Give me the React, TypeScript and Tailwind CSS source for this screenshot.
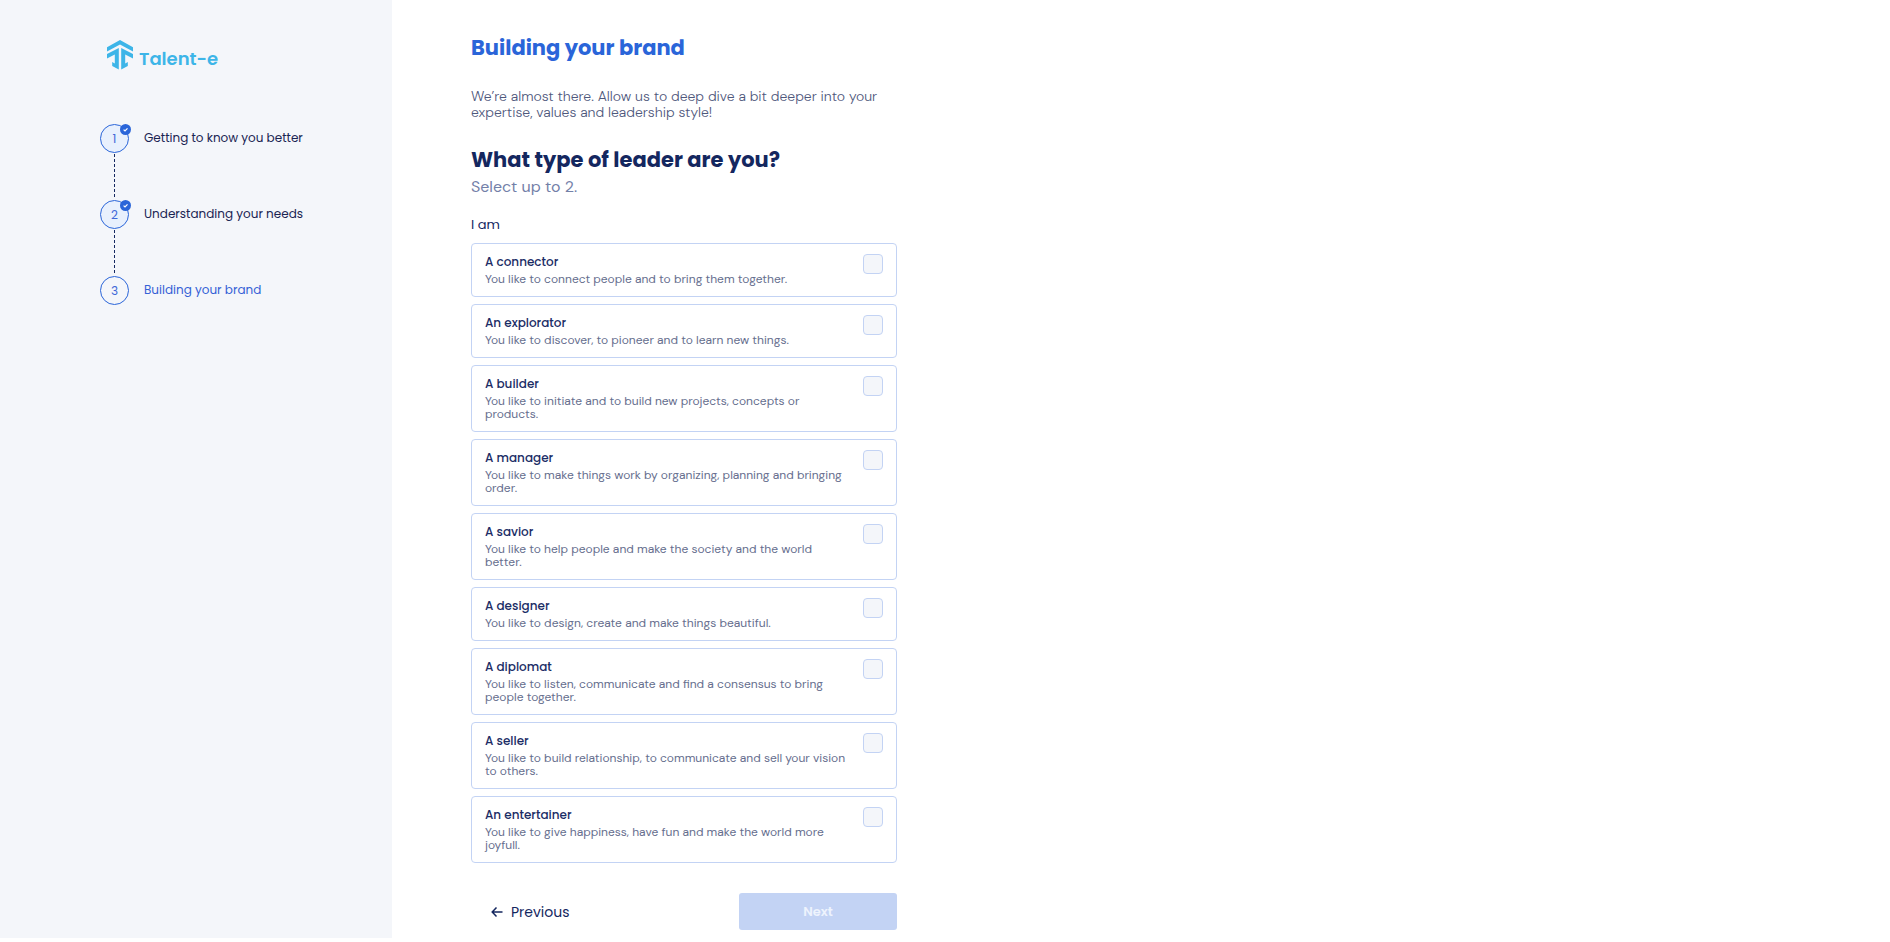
import { useState } from 'react'

interface Leader {
  id: string
  title: string
  description: string
}

interface Step {
  label: string
  done: boolean
}

const MAX_CHOICES = 2

const steps: Step[] = [
  { label: 'Getting to know you better', done: true },
  { label: 'Understanding your needs', done: true },
  { label: 'Building your brand', done: false },
]

const leaders: Leader[] = [
  { id: 'connector', title: 'A connector', description: 'You like to connect people and to bring them together.' },
  { id: 'explorator', title: 'An explorator', description: 'You like to discover, to pioneer and to learn new things.' },
  { id: 'builder', title: 'A builder', description: 'You like to initiate and to build new projects, concepts or products.' },
  { id: 'manager', title: 'A manager', description: 'You like to make things work by organizing, planning and bringing order.' },
  { id: 'savior', title: 'A savior', description: 'You like to help people and make the society and the world better.' },
  { id: 'designer', title: 'A designer', description: 'You like to design, create and make things beautiful.' },
  { id: 'diplomat', title: 'A diplomat', description: 'You like to listen, communicate and find a consensus to bring people together.' },
  { id: 'seller', title: 'A seller', description: 'You like to build relationship, to communicate and sell your vision to others.' },
  { id: 'entertainer', title: 'An entertainer', description: 'You like to give happiness, have fun and make the world more joyfull.' },
]

function Logo() {
  return (
    <a href="#" className="flex items-end gap-1.5 text-[#3db5e8]">
      <svg viewBox="0 0 26 30" className="h-[30px] w-[26px]" fill="currentColor" aria-hidden="true">
        <path d="M13 0 26 7.2V11.6L13 4.4 0 11.6V7.2Z" />
        <path d="M11.8 8V29.6L5.2 26V22L7.8 23.4V14.4L0 18.4V14Z" />
        <path d="M14.2 8V29.6L20.8 26V22L18.2 23.4V14.4L26 18.4V14Z" />
      </svg>
      <span className="text-lg leading-[22px] font-semibold">Talent-e</span>
    </a>
  )
}

function StepItem({ step, index }: { step: Step; index: number }) {
  const isLast = index === steps.length - 1

  return (
    <li className="flex gap-[15px]">
      <div className="flex flex-col items-center">
        <div
          className={`relative flex size-[29px] items-center justify-center rounded-full border border-[#2a65d9] text-xs text-[#4169d8] ${
            step.done ? 'bg-[#e8f0fd]' : ''
          }`}
        >
          {index + 1}
          {step.done && (
            <svg viewBox="0 0 11 11" className="absolute -top-px -right-[3px] size-[11px]" aria-hidden="true">
              <circle cx="5.5" cy="5.5" r="5.5" fill="#2a65d9" />
              <path d="M3.6 5.6 5 6.9 7.5 4.3" fill="none" stroke="#fff" strokeWidth="1.2" />
            </svg>
          )}
        </div>
        {!isLast && (
          <svg className="h-[47px] w-px" aria-hidden="true">
            <line x1="0.5" y1="1" x2="0.5" y2="46" stroke="#14275f" strokeDasharray="3 2" />
          </svg>
        )}
      </div>
      <span className={`h-7 text-xs leading-7 ${step.done ? 'text-[#1a2452]' : 'text-[#3561d6]'}`}>
        {step.label}
      </span>
    </li>
  )
}

function LeaderCard({ leader, checked, onToggle }: { leader: Leader; checked: boolean; onToggle: () => void }) {
  return (
    <label
      htmlFor={leader.id}
      className="flex cursor-pointer items-start justify-between gap-3 rounded border border-[#c3d3f4] px-[13px] py-2.5"
    >
      <span className="flex flex-col gap-[3px]">
        <span className="text-xs leading-4 font-medium text-[#1b2d66]">{leader.title}</span>
        <span className="font-['DM_Sans','Inter',sans-serif] text-xs leading-[13px] text-[#666e8e]">
          {leader.description}
        </span>
      </span>
      <input
        id={leader.id}
        type="checkbox"
        checked={checked}
        onChange={onToggle}
        className="size-5 shrink-0 appearance-none rounded border border-[#c3d3f4] bg-[#f4f6fa] checked:bg-[#2a65d9]"
      />
    </label>
  )
}

export default function App() {
  const [selected, setSelected] = useState<string[]>([])

  const toggle = (id: string) => {
    setSelected((prev) => {
      if (prev.includes(id)) return prev.filter((item) => item !== id)
      return prev.length < MAX_CHOICES ? [...prev, id] : prev
    })
  }

  return (
    <div className="flex font-['Poppins','Inter',sans-serif]">
      {/* Sidebar */}
      <aside className="w-[392px] shrink-0 bg-[#f4f6fa] pt-10 pl-[100px]">
        <div className="pl-[7px]">
          <Logo />
        </div>
        <ol className="mt-[54px]">
          {steps.map((step, index) => (
            <StepItem key={step.label} step={step} index={index} />
          ))}
        </ol>
      </aside>

      {/* Content */}
      <main className="grow pt-9 pb-2 pl-[79px]">
        <div className="max-w-[426px]">
          <h1 className="text-[21px] leading-6 font-bold text-[#2a65d9]">Building your brand</h1>
          <p className="mt-7 font-['DM_Sans','Inter',sans-serif] text-sm leading-4 font-light text-[#4f587c]">
            We’re almost there. Allow us to deep dive a bit deeper into your expertise, values and leadership style!
          </p>
          <h2 className="mt-7 text-[21px] leading-6 font-bold text-[#14275f]">What type of leader are you?</h2>
          <p className="mt-[7px] font-['DM_Sans','Inter',sans-serif] text-base leading-4 text-[#7380a8]">
            Select up to 2.
          </p>

          <fieldset className="mt-[22px]">
            <legend className="text-[13px] leading-4 text-[#14275f]">I am</legend>
            <div className="mt-2.5 flex flex-col gap-[7px]">
              {leaders.map((leader) => (
                <LeaderCard
                  key={leader.id}
                  leader={leader}
                  checked={selected.includes(leader.id)}
                  onToggle={() => toggle(leader.id)}
                />
              ))}
            </div>
          </fieldset>

          {/* Actions */}
          <div className="mt-[30px] flex items-center justify-between">
            <button type="button" className="flex items-center gap-2 pl-5 text-sm text-[#14275f]">
              <svg viewBox="0 0 12 12" className="size-3" fill="none" stroke="currentColor" strokeWidth="1.5" aria-hidden="true">
                <path d="M11.5 6H1.5M5.5 1.5 1.2 6l4.3 4.5" />
              </svg>
              Previous
            </button>
            <button
              type="button"
              disabled={selected.length === 0}
              className="h-[37px] w-[158px] rounded-[3px] bg-[#2a65d9] text-[13px] font-semibold text-white disabled:bg-[#c3d3f4] disabled:text-[#eef3fd]"
            >
              Next
            </button>
          </div>
        </div>
      </main>
    </div>
  )
}
